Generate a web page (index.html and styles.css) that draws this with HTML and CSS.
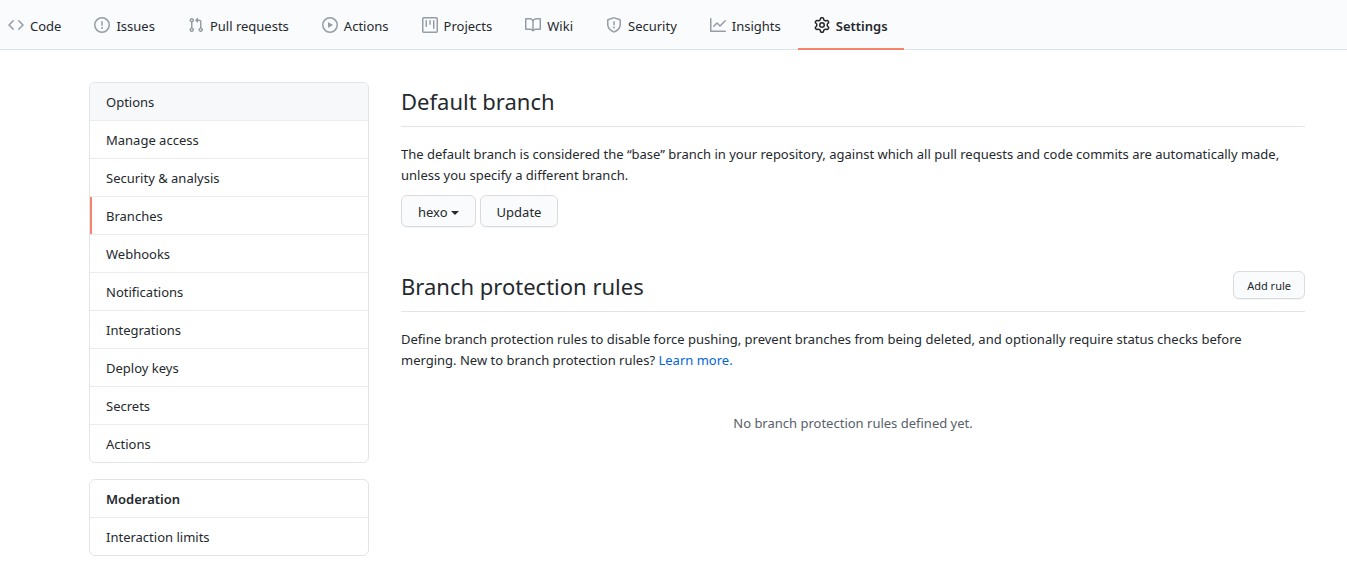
FILE: index.html
```html
<!DOCTYPE html>
<html lang="en">
<head>
<meta charset="utf-8">
<meta name="viewport" content="width=device-width, initial-scale=1">
<title>Branches</title>
<link rel="stylesheet" href="styles.css">
</head>
<body>
<nav class="repo-nav" aria-label="Repository">
  <a class="tab" href="#"><svg class="icon" viewBox="0 0 16 16"><path fill-rule="evenodd" d="M4.72 3.22a.75.75 0 011.06 1.06L2.06 8l3.72 3.72a.75.75 0 11-1.06 1.06L.47 8.53a.75.75 0 010-1.06l4.25-4.25zm6.56 0a.75.75 0 10-1.06 1.06L13.94 8l-3.72 3.72a.75.75 0 101.06 1.06l4.25-4.25a.75.75 0 000-1.06l-4.25-4.25z"/></svg>Code</a>
  <a class="tab" href="#"><svg class="icon" viewBox="0 0 16 16"><path fill-rule="evenodd" d="M8 1.5a6.5 6.5 0 100 13 6.5 6.5 0 000-13zM0 8a8 8 0 1116 0A8 8 0 010 8zm9 3a1 1 0 11-2 0 1 1 0 012 0zm-.25-6.25a.75.75 0 00-1.5 0v3.5a.75.75 0 001.5 0v-3.5z"/></svg>Issues</a>
  <a class="tab" href="#"><svg class="icon" viewBox="0 0 16 16"><path fill-rule="evenodd" d="M7.177 3.073L9.573.677A.25.25 0 0110 .854v4.792a.25.25 0 01-.427.177L7.177 3.427a.25.25 0 010-.354zM3.75 2.5a.75.75 0 100 1.5.75.75 0 000-1.5zm-2.25.75a2.25 2.25 0 113 2.122v5.256a2.251 2.251 0 11-1.5 0V5.372A2.25 2.25 0 011.5 3.25zM11 2.5h-1V4h1a1 1 0 011 1v5.628a2.251 2.251 0 101.5 0V5A2.5 2.5 0 0011 2.5zm1 10.25a.75.75 0 111.5 0 .75.75 0 01-1.5 0zM3.75 12a.75.75 0 100 1.5.75.75 0 000-1.5z"/></svg>Pull requests</a>
  <a class="tab" href="#"><svg class="icon" viewBox="0 0 16 16"><path fill-rule="evenodd" d="M1.5 8a6.5 6.5 0 1113 0 6.5 6.5 0 01-13 0zM8 0a8 8 0 100 16A8 8 0 008 0zM6.379 5.227A.25.25 0 006 5.442v5.117a.25.25 0 00.379.214l4.264-2.559a.25.25 0 000-.428L6.379 5.227z"/></svg>Actions</a>
  <a class="tab" href="#"><svg class="icon" viewBox="0 0 16 16"><path fill-rule="evenodd" d="M1.75 0A1.75 1.75 0 000 1.75v12.5C0 15.216.784 16 1.75 16h12.5A1.75 1.75 0 0016 14.25V1.75A1.75 1.75 0 0014.25 0H1.75zM1.5 1.75a.25.25 0 01.25-.25h12.5a.25.25 0 01.25.25v12.5a.25.25 0 01-.25.25H1.75a.25.25 0 01-.25-.25V1.75zM11.75 3a.75.75 0 00-.75.75v7.5a.75.75 0 001.5 0v-7.5a.75.75 0 00-.75-.75zm-8.25.75a.75.75 0 011.5 0v5.5a.75.75 0 01-1.5 0v-5.5zM8 3a.75.75 0 00-.75.75v3.5a.75.75 0 001.5 0v-3.5A.75.75 0 008 3z"/></svg>Projects</a>
  <a class="tab" href="#"><svg class="icon" viewBox="0 0 16 16"><path fill-rule="evenodd" d="M0 1.75A.75.75 0 01.75 1h4.253c1.227 0 2.317.59 3 1.501A3.744 3.744 0 0111.006 1h4.245a.75.75 0 01.75.75v10.5a.75.75 0 01-.75.75h-4.507a2.25 2.25 0 00-1.591.659l-.622.621a.75.75 0 01-1.06 0l-.622-.621A2.25 2.25 0 005.258 13H.75a.75.75 0 01-.75-.75V1.75zm8.755 3a2.25 2.25 0 012.25-2.25H14.5v9h-3.757c-.71 0-1.4.201-1.992.572l.004-7.322zm-1.504 7.324l.004-5.073-.002-2.253A2.25 2.25 0 005.003 2.5H1.5v9h3.757a3.75 3.75 0 011.994.574z"/></svg>Wiki</a>
  <a class="tab" href="#"><svg class="icon" viewBox="0 0 16 16"><path fill-rule="evenodd" d="M7.467.133a1.75 1.75 0 011.066 0l5.25 1.68A1.75 1.75 0 0115 3.48V7c0 1.566-.32 3.182-1.303 4.682-.983 1.498-2.585 2.813-5.032 3.855a1.7 1.7 0 01-1.33 0c-2.447-1.042-4.049-2.357-5.032-3.855C1.32 10.182 1 8.566 1 7V3.48a1.75 1.75 0 011.217-1.667l5.25-1.68zm.61 1.429a.25.25 0 00-.153 0l-5.25 1.68a.25.25 0 00-.174.238V7c0 1.358.275 2.666 1.057 3.86.784 1.194 2.121 2.34 4.366 3.297a.2.2 0 00.154 0c2.245-.956 3.582-2.104 4.366-3.298C13.225 9.666 13.5 8.36 13.5 7V3.48a.25.25 0 00-.174-.237l-5.25-1.68zM9 10.5a1 1 0 11-2 0 1 1 0 012 0zm-.25-5.75a.75.75 0 10-1.5 0v3a.75.75 0 001.5 0v-3z"/></svg>Security</a>
  <a class="tab" href="#"><svg class="icon" viewBox="0 0 16 16"><path fill-rule="evenodd" d="M1.5 1.75a.75.75 0 00-1.5 0v12.5c0 .414.336.75.75.75h14.5a.75.75 0 000-1.5H1.5V1.75zm14.28 2.53a.75.75 0 00-1.06-1.06L10 7.94 7.53 5.47a.75.75 0 00-1.06 0L3.22 8.72a.75.75 0 001.06 1.06L7 7.06l2.47 2.47a.75.75 0 001.06 0l5.25-5.25z"/></svg>Insights</a>
  <a class="tab tab-current" href="#" aria-current="page"><svg class="icon" viewBox="0 0 16 16"><path fill-rule="evenodd" d="M7.429 1.525a6.593 6.593 0 011.142 0c.036.003.108.036.137.146l.289 1.105c.147.56.55.967.997 1.189.174.086.341.183.501.29.417.278.97.423 1.53.27l1.102-.303c.11-.03.175.016.195.046.219.31.41.641.573.989.014.031.022.11-.059.19l-.815.806c-.411.406-.562.957-.53 1.456a4.588 4.588 0 010 .582c-.032.499.119 1.05.53 1.456l.815.806c.08.08.073.159.059.19a6.494 6.494 0 01-.573.99c-.02.029-.086.074-.195.045l-1.103-.303c-.559-.153-1.112-.008-1.529.27-.16.107-.327.204-.5.29-.449.222-.851.628-.998 1.189l-.289 1.105c-.029.11-.101.143-.137.146a6.613 6.613 0 01-1.142 0c-.036-.003-.108-.037-.137-.146l-.289-1.105c-.147-.56-.55-.967-.997-1.189a4.502 4.502 0 01-.501-.29c-.417-.278-.97-.423-1.53-.27l-1.102.303c-.11.03-.175-.016-.195-.046a6.492 6.492 0 01-.573-.989c-.014-.031-.022-.11.059-.19l.815-.806c.411-.406.562-.957.53-1.456a4.587 4.587 0 010-.582c.032-.499-.119-1.05-.53-1.456l-.815-.806c-.08-.08-.073-.159-.059-.19a6.44 6.44 0 01.573-.99c.02-.029.086-.075.195-.045l1.103.303c.559.153 1.112.008 1.529-.27.16-.107.327-.204.5-.29.449-.222.851-.628.998-1.189l.289-1.105c.029-.11.101-.143.137-.146zM8 0c-.236 0-.47.01-.701.03-.743.065-1.29.615-1.458 1.261l-.29 1.106c-.017.066-.078.158-.211.224a5.994 5.994 0 00-.668.386c-.123.082-.233.09-.3.071L3.27 2.776c-.644-.177-1.392.02-1.82.63a7.977 7.977 0 00-.704 1.217c-.315.675-.111 1.422.363 1.891l.815.806c.05.048.098.147.088.294a6.084 6.084 0 000 .772c.01.147-.038.246-.088.294l-.815.806c-.474.469-.678 1.216-.363 1.891.2.428.436.835.704 1.218.428.609 1.176.806 1.82.63l1.103-.303c.066-.019.176-.011.299.071.213.143.436.272.668.386.133.066.194.158.212.224l.289 1.106c.169.646.715 1.196 1.458 1.26a8.094 8.094 0 001.402 0c.743-.064 1.29-.614 1.458-1.26l.29-1.106c.017-.066.078-.158.211-.224a5.98 5.98 0 00.668-.386c.123-.082.233-.09.3-.071l1.102.302c.644.177 1.392-.02 1.82-.63.268-.382.505-.789.704-1.217.315-.675.111-1.422-.364-1.891l-.814-.806c-.05-.048-.098-.147-.088-.294a6.1 6.1 0 000-.772c-.01-.147.039-.246.088-.294l.814-.806c.475-.469.679-1.216.364-1.891a7.992 7.992 0 00-.704-1.218c-.428-.609-1.176-.806-1.82-.63l-1.103.303c-.066.019-.176.011-.299-.071a5.991 5.991 0 00-.668-.386c-.133-.066-.194-.158-.212-.224L10.16 1.29C9.99.645 9.444.095 8.701.031A8.094 8.094 0 008 0zm1.5 8a1.5 1.5 0 11-3 0 1.5 1.5 0 013 0zM11 8a3 3 0 11-6 0 3 3 0 016 0z"/></svg>Settings</a>
</nav>
<div class="layout">
  <aside class="sidebar">
    <nav class="menu" aria-label="Settings">
      <a class="menu-item menu-item-hover" href="#">Options</a>
      <a class="menu-item" href="#">Manage access</a>
      <a class="menu-item" href="#">Security &amp; analysis</a>
      <a class="menu-item menu-item-current" href="#" aria-current="page">Branches</a>
      <a class="menu-item" href="#">Webhooks</a>
      <a class="menu-item" href="#">Notifications</a>
      <a class="menu-item" href="#">Integrations</a>
      <a class="menu-item" href="#">Deploy keys</a>
      <a class="menu-item" href="#">Secrets</a>
      <a class="menu-item" href="#">Actions</a>
    </nav>
    <nav class="menu" aria-labelledby="moderation">
      <h3 class="menu-item menu-heading" id="moderation">Moderation</h3>
      <a class="menu-item" href="#">Interaction limits</a>
    </nav>
  </aside>
  <main class="content">
    <section>
      <header class="subhead"><h2 class="title">Default branch</h2></header>
      <p class="text">The default branch is considered the “base” branch in your repository, against which all pull requests and code commits are automatically made, unless you specify a different branch.</p>
      <div class="actions">
        <button class="btn" type="button" aria-haspopup="true">hexo<span class="caret"></span></button>
        <button class="btn" type="button">Update</button>
      </div>
    </section>
    <section>
      <header class="subhead">
        <h2 class="title">Branch protection rules</h2>
        <button class="btn btn-small" type="button">Add rule</button>
      </header>
      <p class="text">Define branch protection rules to disable force pushing, prevent branches from being deleted, and optionally require status checks before merging. New to branch protection rules? <a class="link" href="#">Learn more.</a></p>
      <p class="blank">No branch protection rules defined yet.</p>
    </section>
  </main>
</div>
</body>
</html>
```
FILE: styles.css
```css
* {
  box-sizing: border-box;
}

body {
  margin: 0;
  background: #fff;
  color: #24292e;
  font-family: "Segoe UI", "Noto Sans", "Open Sans", sans-serif;
  font-size: 13px;
  line-height: 21px;
}

.repo-nav {
  display: flex;
  gap: 1px;
  height: 50px;
  background: #fafbfc;
  border-bottom: 1px solid #e1e4e8;
}

.tab {
  display: flex;
  align-items: center;
  gap: 6px;
  height: 50px;
  padding: 4px 16px 0;
  border-bottom: 2px solid transparent;
  color: #24292e;
  text-decoration: none;
  white-space: nowrap;
}

.tab:first-child {
  padding-left: 8px;
}

.tab-current {
  border-bottom-color: #f9826c;
  font-weight: 600;
}

.icon {
  flex: none;
  width: 16px;
  height: 16px;
  margin-bottom: 2px;
  fill: #959da5;
}

.tab-current .icon {
  fill: #24292e;
}

.layout {
  display: grid;
  grid-template-columns: 280px minmax(0, 1fr);
  gap: 32px;
  padding: 32px 42px 0 89px;
}

.sidebar {
  display: flex;
  flex-direction: column;
  gap: 16px;
}

.menu {
  border: 1px solid #e1e4e8;
  border-radius: 6px;
  overflow: hidden;
}

.menu-item {
  display: block;
  padding: 9px 16px 7px;
  border-bottom: 1px solid #eaecef;
  color: #24292e;
  text-decoration: none;
}

.menu-item:last-child {
  border-bottom: 0;
}

.menu-item-hover {
  background: #f6f8fa;
}

.menu-item-current {
  background: linear-gradient(#f9826c, #f9826c) left / 2px 100% no-repeat;
  background-clip: padding-box;
}

.menu-heading {
  margin: 0;
  font-size: 13px;
  font-weight: 600;
}

.content {
  display: flex;
  flex-direction: column;
  gap: 40px;
}

.subhead {
  display: flex;
  align-items: center;
  justify-content: space-between;
  margin-bottom: 17px;
  padding-bottom: 8px;
  border-bottom: 1px solid #e1e4e8;
}

.title {
  margin: 0;
  padding-top: 2px;
  font-size: 22px;
  font-weight: 400;
  line-height: 34px;
}

.text {
  margin: 0;
  padding-right: 12px;
}

.link {
  color: #0366d6;
  text-decoration: none;
}

.actions {
  display: flex;
  gap: 4px;
  margin-top: 9px;
}

.btn {
  padding: 6px 16px 4px;
  border: 1px solid #d9dcdf;
  border-radius: 6px;
  background: #fafbfc;
  box-shadow: 0 1px 0 rgba(27, 31, 35, 0.04);
  color: #24292e;
  font: inherit;
  line-height: 20px;
}

.btn-small {
  padding: 4px 13px 2px;
  font-size: 11px;
}

.caret {
  display: inline-block;
  margin-left: 3px;
  border: 4px solid transparent;
  border-top-color: currentColor;
  border-bottom: 0;
  vertical-align: 2px;
}

.blank {
  margin: 42px 0 0;
  color: #586069;
  text-align: center;
}
```
